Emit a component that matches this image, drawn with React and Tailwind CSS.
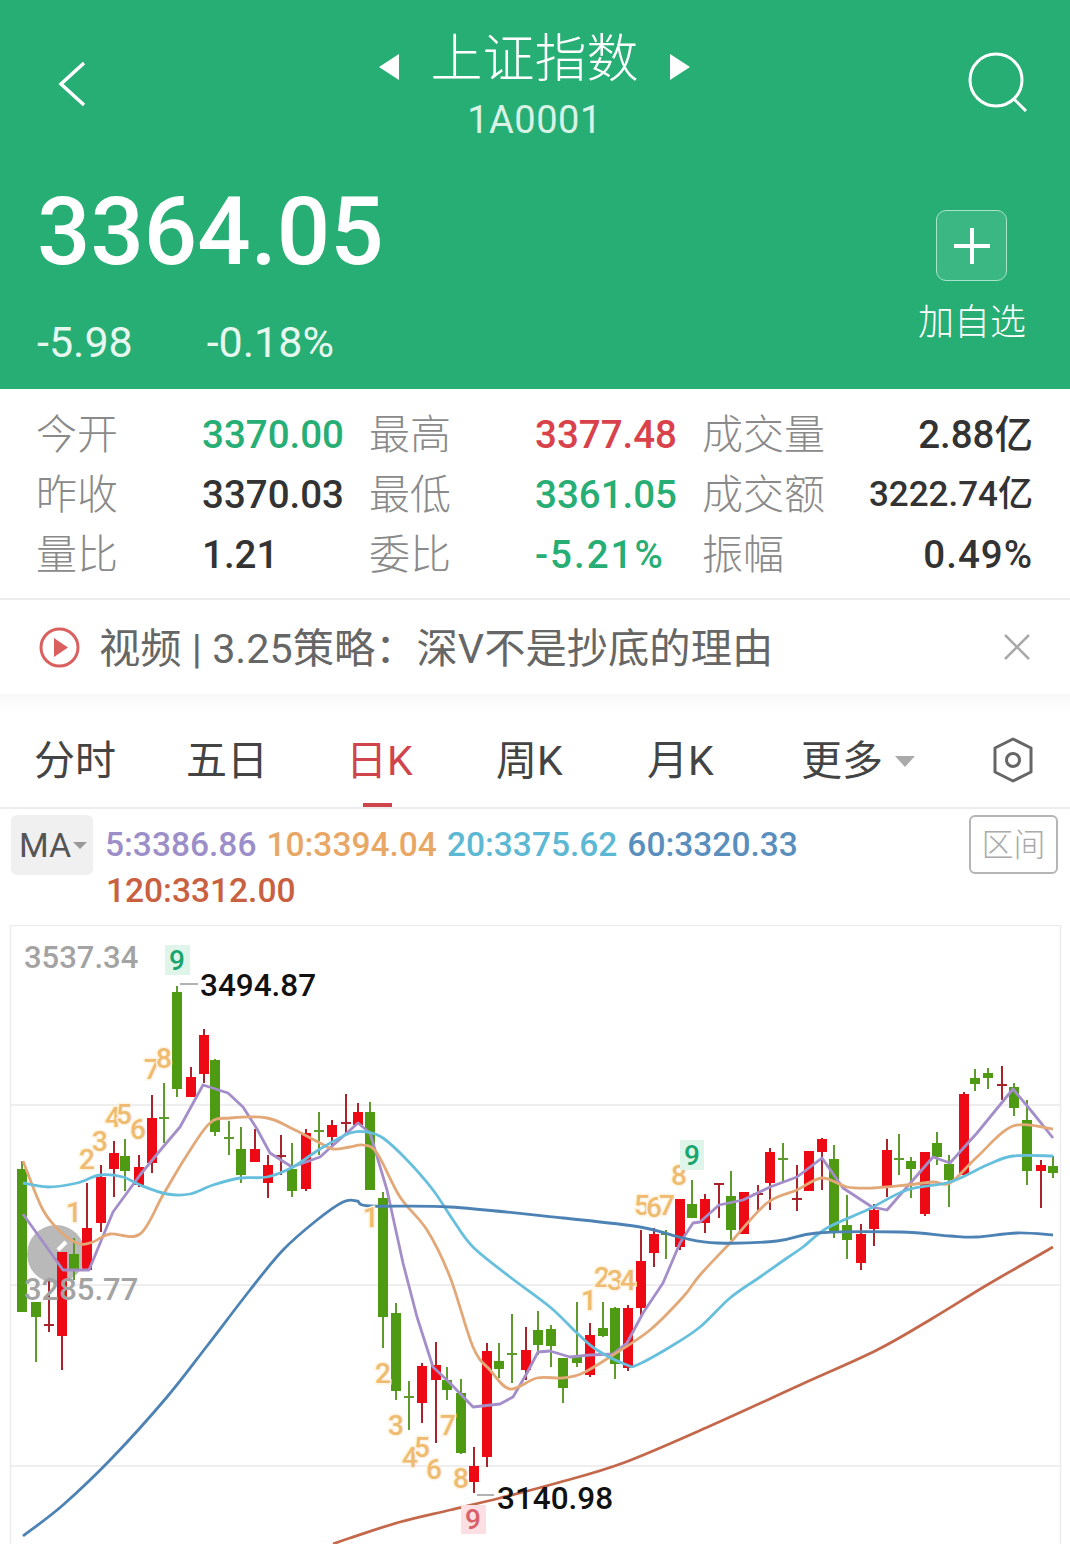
import React from 'react';

// x, wick top, wick bottom, body top, body bottom, colour (r/g). Flat body = cross candle.
const candles = [
  [22, 1161, 1312, 1169, 1312, 'g'], [36, 1302, 1362, 1302, 1317, 'g'], [49, 1278, 1332, 1324, 1326, 'r'],
  [62, 1252, 1370, 1252, 1336, 'r'], [74, 1238, 1280, 1254, 1270, 'g'], [87, 1183, 1270, 1228, 1270, 'r'],
  [101, 1165, 1232, 1177, 1223, 'r'], [114, 1141, 1197, 1153, 1169, 'r'], [125, 1139, 1191, 1156, 1171, 'g'],
  [139, 1155, 1187, 1167, 1185, 'r'], [152, 1095, 1173, 1118, 1163, 'r'], [164, 1083, 1143, 1117, 1119, 'g'],
  [177, 986, 1097, 992, 1089, 'g'], [191, 1067, 1097, 1077, 1097, 'r'], [204, 1029, 1083, 1035, 1074, 'r'],
  [215, 1059, 1136, 1060, 1132, 'g'], [229, 1121, 1155, 1137, 1139, 'g'], [241, 1127, 1183, 1149, 1175, 'g'],
  [255, 1129, 1162, 1149, 1162, 'r'], [268, 1155, 1198, 1165, 1183, 'r'], [281, 1135, 1175, 1155, 1155, 'r'],
  [292, 1143, 1197, 1169, 1191, 'g'], [306, 1129, 1191, 1133, 1189, 'r'], [319, 1112, 1155, 1130, 1132, 'g'],
  [332, 1120, 1147, 1125, 1137, 'r'], [346, 1094, 1133, 1122, 1124, 'r'], [358, 1103, 1125, 1112, 1125, 'r'],
  [370, 1102, 1190, 1112, 1190, 'g'], [383, 1192, 1348, 1198, 1317, 'g'], [396, 1303, 1400, 1313, 1391, 'g'],
  [409, 1381, 1430, 1396, 1398, 'g'], [422, 1363, 1423, 1366, 1403, 'r'], [436, 1342, 1443, 1365, 1380, 'r'],
  [447, 1367, 1400, 1380, 1390, 'g'], [461, 1379, 1454, 1393, 1453, 'g'], [474, 1447, 1493, 1466, 1482, 'r'],
  [487, 1343, 1467, 1351, 1457, 'r'], [499, 1343, 1378, 1361, 1369, 'g'], [512, 1314, 1383, 1353, 1355, 'g'],
  [526, 1327, 1380, 1350, 1370, 'r'], [538, 1311, 1355, 1330, 1345, 'g'], [551, 1325, 1367, 1329, 1346, 'g'],
  [563, 1358, 1403, 1358, 1388, 'g'], [577, 1302, 1367, 1356, 1363, 'g'], [590, 1323, 1377, 1335, 1375, 'r'],
  [603, 1302, 1337, 1328, 1336, 'g'], [615, 1307, 1379, 1308, 1364, 'g'], [628, 1305, 1371, 1308, 1368, 'r'],
  [641, 1230, 1315, 1261, 1308, 'r'], [654, 1228, 1267, 1234, 1253, 'r'], [666, 1230, 1259, 1233, 1235, 'g'],
  [680, 1199, 1250, 1199, 1247, 'r'], [692, 1180, 1218, 1204, 1218, 'g'], [705, 1194, 1233, 1199, 1223, 'r'],
  [719, 1184, 1218, 1183, 1185, 'r'], [731, 1171, 1240, 1196, 1230, 'g'], [744, 1192, 1234, 1192, 1234, 'r'],
  [758, 1185, 1212, 1193, 1195, 'r'], [770, 1148, 1210, 1152, 1183, 'r'], [783, 1143, 1183, 1158, 1160, 'g'],
  [797, 1165, 1211, 1198, 1200, 'r'], [809, 1151, 1191, 1151, 1191, 'r'], [822, 1138, 1190, 1139, 1152, 'r'],
  [834, 1145, 1238, 1159, 1233, 'g'], [847, 1195, 1259, 1225, 1240, 'g'], [861, 1224, 1270, 1234, 1263, 'r'],
  [874, 1204, 1246, 1210, 1229, 'r'], [887, 1139, 1197, 1150, 1187, 'r'], [899, 1134, 1175, 1158, 1160, 'g'],
  [911, 1157, 1198, 1161, 1169, 'g'], [925, 1152, 1216, 1152, 1214, 'r'], [937, 1132, 1165, 1143, 1157, 'g'],
  [949, 1155, 1207, 1164, 1180, 'g'], [964, 1092, 1175, 1094, 1175, 'r'], [975, 1069, 1091, 1078, 1084, 'g'],
  [988, 1068, 1089, 1073, 1078, 'g'], [1002, 1066, 1100, 1084, 1086, 'r'], [1014, 1083, 1116, 1087, 1108, 'g'],
  [1027, 1100, 1185, 1120, 1171, 'g'], [1041, 1160, 1208, 1165, 1171, 'r'], [1053, 1156, 1178, 1166, 1173, 'g'],
];

const maLines = [
  {
    color: '#a48ec9',
    smooth: false,
    points: '23,1214 63,1270 89,1270 113,1212 140,1175 163,1147 180,1127 203,1085 228,1093 243,1107 257,1129 270,1153 292,1167 320,1157 358,1123 370,1133 387,1190 403,1263 417,1317 433,1367 450,1383 473,1407 500,1404 513,1397 527,1373 538,1352 550,1351 570,1357 590,1355 613,1354 627,1343 643,1313 663,1283 680,1243 693,1223 700,1222 719,1205 743,1200 770,1187 797,1177 822,1158 843,1188 872,1207 887,1210 907,1187 933,1157 950,1163 977,1133 1013,1089 1033,1113 1053,1138',
  },
  {
    color: '#e3a878',
    smooth: true,
    points: '23,1161 43,1210 63,1234 80,1244 93,1242 110,1234 140,1234 163,1195 187,1155 210,1123 230,1118 267,1118 293,1129 320,1143 333,1149 350,1147 363,1145 377,1153 400,1197 427,1230 450,1277 473,1347 490,1370 510,1389 537,1378 563,1378 583,1373 613,1355 650,1330 683,1297 700,1275 730,1243 767,1203 797,1190 822,1178 847,1187 873,1188 907,1185 933,1182 950,1183 977,1157 1013,1126 1053,1129',
  },
  {
    color: '#66bfdc',
    smooth: true,
    points: '23,1183 48,1187 77,1183 100,1175 123,1177 140,1185 167,1194 190,1194 213,1185 240,1178 267,1177 293,1167 320,1149 350,1133 367,1132 383,1138 407,1160 433,1190 453,1220 473,1247 510,1277 550,1307 577,1333 597,1350 627,1365 637,1365 670,1347 700,1327 730,1298 760,1277 787,1258 803,1247 827,1228 867,1210 907,1190 950,1182 987,1165 1013,1156 1053,1156',
  },
  {
    color: '#4d82b4',
    smooth: true,
    points: '23,1536 63,1505 113,1457 167,1397 207,1346 250,1290 283,1250 317,1220 343,1202 357,1201 370,1206 450,1207 563,1218 640,1227 683,1238 717,1243 777,1241 817,1233 900,1232 950,1236 977,1237 1017,1233 1053,1235',
  },
  {
    color: '#c4684c',
    smooth: true,
    points: '333,1544 350,1538 400,1522 450,1510 500,1498 557,1483 623,1463 710,1426 800,1385 877,1350 933,1318 987,1285 1053,1247',
  },
];

// the orange sequence numbers printed around the candles
const tdLabels = [
  ['1', 74, 1212], ['2', 87, 1159], ['3', 100, 1141], ['4', 113, 1117], ['5', 124, 1114], ['6', 138, 1129], ['7', 152, 1069], ['8', 164, 1058],
  ['1', 371, 1217], ['2', 383, 1373], ['3', 396, 1425], ['4', 410, 1457], ['5', 422, 1447], ['6', 434, 1469], ['7', 448, 1425], ['8', 461, 1478],
  ['1', 589, 1300], ['2', 602, 1277], ['3', 615, 1280], ['4', 628, 1280], ['5', 642, 1205], ['6', 654, 1207], ['7', 667, 1205], ['8', 679, 1175],
];

const stats = [
  ['今开', '3370.00', 'text-[#27ae74]', '最高', '3377.48', 'text-[#d9424a]', '成交量', '2.88亿', ''],
  ['昨收', '3370.03', 'text-[#333]', '最低', '3361.05', 'text-[#27ae74]', '成交额', '3222.74亿', 'text-[35px]'],
  ['量比', '1.21', 'text-[#333]', '委比', '-5.21%', 'text-[#27ae74] tracking-[2px]', '振幅', '0.49%', 'tracking-[1px]'],
];

const tabs = [
  ['分时', 'w-[152px]', 'text-[#444]'],
  ['五日', 'w-[160px]', 'text-[#444]'],
  ['日K', 'w-[150px]', 'text-[#d0454c]'],
  ['周K', 'w-[151px]', 'text-[#444]'],
  ['月K', 'w-[154px]', 'text-[#444]'],
];

const maValues = [
  ['5:3386.86', 'text-[#9c8fc9]'],
  ['10:3394.04', 'text-[#e8a765]'],
  ['20:3375.62', 'text-[#5db8d3]'],
  ['60:3320.33', 'text-[#5a8fbd]'],
];

// catmull-rom through the points, so the slower averages don't show corners
const smoothPath = (points) => {
  const p = points.split(' ').map((s) => s.split(',').map(Number));
  let d = `M${p[0][0]} ${p[0][1]}`;
  for (let i = 0; i < p.length - 1; i++) {
    const a = p[i - 1] || p[i];
    const b = p[i];
    const c = p[i + 1];
    const e = p[i + 2] || c;
    d += `C${b[0] + (c[0] - a[0]) / 6} ${b[1] + (c[1] - a[1]) / 6} ${c[0] - (e[0] - b[0]) / 6} ${c[1] - (e[1] - b[1]) / 6} ${c[0]} ${c[1]}`;
  }
  return d;
};

const KChart = () => (
  <svg viewBox="0 925 1070 619" className="block w-[1070px] h-[619px]">
    <rect x="10.5" y="925.5" width="1050" height="700" fill="none" stroke="#ececec" strokeWidth="1.5" />
    {[1105, 1285, 1466].map((y) => (
      <line key={y} x1="10" x2="1060" y1={y} y2={y} stroke="#e9e9e9" strokeWidth="1.5" />
    ))}

    <circle cx="56" cy="1254" r="29" fill="#b9b9b9" />
    <path d="M58 1250l8-8" stroke="#fff" strokeWidth="4" fill="none" />

    {candles.map(([x, wt, wb, bt, bb, c]) => {
      const color = c === 'r' ? '#ee0a14' : '#4e9a12';
      const wick = c === 'r' ? '#a8242a' : '#5f9a2c';
      const cross = bb - bt <= 2;
      return (
        <g key={x}>
          <line x1={x} x2={x} y1={wt} y2={wb} stroke={wick} strokeWidth="2" />
          <rect x={x - 5} y={bt} width="10" height={Math.max(bb - bt, 2)} fill={cross ? wick : color} />
        </g>
      );
    })}

    {maLines.map((l) => (
      <path
        key={l.color}
        d={l.smooth ? smoothPath(l.points) : `M${l.points.replaceAll(' ', 'L').replaceAll(',', ' ')}`}
        fill="none"
        stroke={l.color}
        strokeWidth="2.8"
        strokeLinejoin="round"
      />
    ))}

    {tdLabels.map(([t, x, y]) => (
      <text
        key={`${x}-${y}`}
        x={x}
        y={y + 10}
        textAnchor="middle"
        fontSize="28"
        fontWeight="500"
        fill="#eebb70"
        stroke="#fdf4e4"
        strokeWidth="3"
        paintOrder="stroke"
      >
        {t}
      </text>
    ))}

    <rect x="165" y="945" width="25" height="30" fill="#dff5ea" />
    <text x="177" y="970" textAnchor="middle" fontSize="28" fontWeight="500" fill="#1aa56e">9</text>
    <rect x="680" y="1140" width="24" height="30" fill="#dff5ea" />
    <text x="692" y="1165" textAnchor="middle" fontSize="28" fontWeight="500" fill="#1aa56e">9</text>
    <rect x="461" y="1505" width="25" height="29" fill="#fbdfe3" />
    <text x="473" y="1529" textAnchor="middle" fontSize="28" fontWeight="500" fill="#d9606a">9</text>

    <text x="24" y="968" fontSize="31" fontWeight="500" fill="#a3a3a3">3537.34</text>
    <text x="24" y="1300" fontSize="31" fontWeight="500" fill="#a3a3a3">3285.77</text>

    <line x1="180" x2="198" y1="984" y2="984" stroke="#999" strokeWidth="1.5" />
    <text x="200" y="996" fontSize="31.5" fontWeight="500" fill="#111">3494.87</text>
    <line x1="477" x2="494" y1="1495" y2="1495" stroke="#999" strokeWidth="1.5" />
    <text x="497" y="1509" fontSize="31.5" fontWeight="500" fill="#111">3140.98</text>
  </svg>
);

export default function App() {
  return (
    <div className="w-[1070px] h-[1544px] overflow-hidden bg-white font-['Roboto','Noto_Sans_CJK_SC',sans-serif]">
      {/* Green quote header */}
      <div className="h-[389px] bg-[#27ae74] text-white flex flex-col pl-[37px] pr-[43px]">
        <div className="h-[176px] flex items-start justify-between">
          <svg width="30" height="48" viewBox="0 0 30 48" className="mt-[60px] ml-[20px]" fill="none" stroke="#fff" strokeWidth="3.5">
            <path d="M27 3L4 24l23 21" />
          </svg>
          <div className="flex flex-col items-center pt-[27px] ml-[14px]">
            <div className="flex items-center gap-[31px] h-[66px]">
              <span className="mt-[14px] w-0 h-0 border-y-[13px] border-y-transparent border-r-[20px] border-r-white" />
              <span className="text-[52px] leading-[66px] font-light">上证指数</span>
              <span className="mt-[14px] w-0 h-0 border-y-[13px] border-y-transparent border-l-[20px] border-l-white" />
            </div>
            <span className="text-[38px] leading-[44px] mt-[5px] tracking-[0.5px] text-[#d8f2e6]">1A0001</span>
          </div>
          <svg width="60" height="60" viewBox="0 0 60 60" className="mt-[52px] mr-[-1px]" fill="none" stroke="#fff" strokeWidth="3">
            <circle cx="28" cy="28" r="26" />
            <path d="M46 47l12 12" />
          </svg>
        </div>
        <div className="flex justify-between">
          <div className="flex flex-col">
            <span className="text-[94px] leading-[112px] font-medium">3364.05</span>
            <div className="flex gap-[74px] text-[43px] leading-[48px] mt-[30px] text-[#e6f7ef]">
              <span>-5.98</span>
              <span>-0.18%</span>
            </div>
          </div>
          <div className="flex flex-col items-center mt-[34px] mr-[1px]">
            <div className="w-[71px] h-[71px] rounded-[10px] border border-[#a9e4c9] bg-[#3bb783] flex items-center justify-center">
              <svg width="36" height="36" viewBox="0 0 36 36" stroke="#fff" strokeWidth="4">
                <path d="M18 0v36M0 18h36" />
              </svg>
            </div>
            <span className="text-[36px] leading-[44px] mt-[20px] font-light whitespace-nowrap">加自选</span>
          </div>
        </div>
      </div>

      {/* Quote stats */}
      <div className="h-[211px] pt-[16px] pl-[36px] pr-[37px] border-b-2 border-[#ececec]">
        {stats.map((row) => (
          <div key={row[0]} className="h-[60px] flex items-center text-[38.5px] leading-[60px] font-medium">
            <span className="w-[166px] text-[41px] text-[#8a8a8a] font-light">{row[0]}</span>
            <span className={`w-[167px] ${row[2]}`}>{row[1]}</span>
            <span className="w-[166px] text-[41px] text-[#8a8a8a] font-light">{row[3]}</span>
            <span className={`w-[167px] ${row[5]}`}>{row[4]}</span>
            <span className="w-[130px] text-[41px] text-[#8a8a8a] font-light whitespace-nowrap">{row[6]}</span>
            <span className={`flex-1 text-right text-[#333] whitespace-nowrap ${row[8]}`}>{row[7]}</span>
          </div>
        ))}
      </div>

      {/* News strip */}
      <div className="h-[94px] flex items-center pl-[39px] pr-[39px] bg-white">
        <svg width="41" height="41" viewBox="0 0 41 41" fill="none">
          <circle cx="20.5" cy="20.5" r="18.5" stroke="#d9605f" strokeWidth="3" />
          <path d="M15 11l14 9.5L15 30z" fill="#d9605f" />
        </svg>
        <span className="ml-[19px] mt-[6px] text-[41.3px] text-[#666] whitespace-nowrap">视频 | 3.25策略：深V不是抄底的理由</span>
        <svg width="28" height="28" viewBox="0 0 28 28" className="ml-auto" stroke="#a9a9a9" strokeWidth="2.5">
          <path d="M2 2l24 24M26 2L2 26" />
        </svg>
      </div>

      {/* Period tabs */}
      <div className="h-[115px] bg-gradient-to-b from-[#f8f8f8] to-white to-[16%] flex items-center pl-[34px] pr-[35px] pt-[20px] border-b-2 border-[#ececec]">
        {tabs.map(([label, w, color]) => (
          <span key={label} className={`relative text-[41px] leading-[50px] ${w} ${color}`}>
            {label}
            {label === '日K' && (
              <span className="absolute left-[17px] top-[67px] w-[29px] h-[4px] bg-[#d0454c]" />
            )}
          </span>
        ))}
        <span className="text-[41px] leading-[50px] text-[#444]">更多</span>
        <span className="ml-[12px] mt-[2px] w-0 h-0 border-x-[10px] border-x-transparent border-t-[11px] border-t-[#aaa]" />
        <svg width="42" height="46" viewBox="0 0 42 46" className="ml-auto mr-[1px] mt-[-2px]" fill="none" stroke="#666" strokeWidth="3">
          <path d="M21 2l18 9v24l-18 9-18-9V11z" strokeLinejoin="round" />
          <circle cx="21" cy="23" r="6.5" />
        </svg>
      </div>

      {/* MA legend */}
      <div className="h-[116px] relative pl-[11px] pt-[6px] pr-[12px] flex items-start">
        <div className="w-[82px] h-[60px] bg-[#f0f0f0] rounded-[6px] flex items-center pl-[8px]">
          <span className="text-[34px] text-[#555]">MA</span>
          <span className="ml-[2px] w-0 h-0 border-x-[7px] border-x-transparent border-t-[7px] border-t-[#999]" />
        </div>
        <div className="ml-[12px] w-[720px] flex flex-wrap gap-x-[10px] text-[33.5px] leading-[46px] pt-[7px] font-medium">
          {maValues.map(([t, c]) => (
            <span key={t} className={c}>{t}</span>
          ))}
          <span className="w-full pl-[1px] text-[#c9603f]">120:3312.00</span>
        </div>
        <div className="ml-auto w-[89px] h-[59px] border-2 border-[#b5b5b5] rounded-[6px] flex items-center justify-center text-[32px] text-[#aaa] font-light">
          区间
        </div>
      </div>

      <KChart />
    </div>
  );
}
